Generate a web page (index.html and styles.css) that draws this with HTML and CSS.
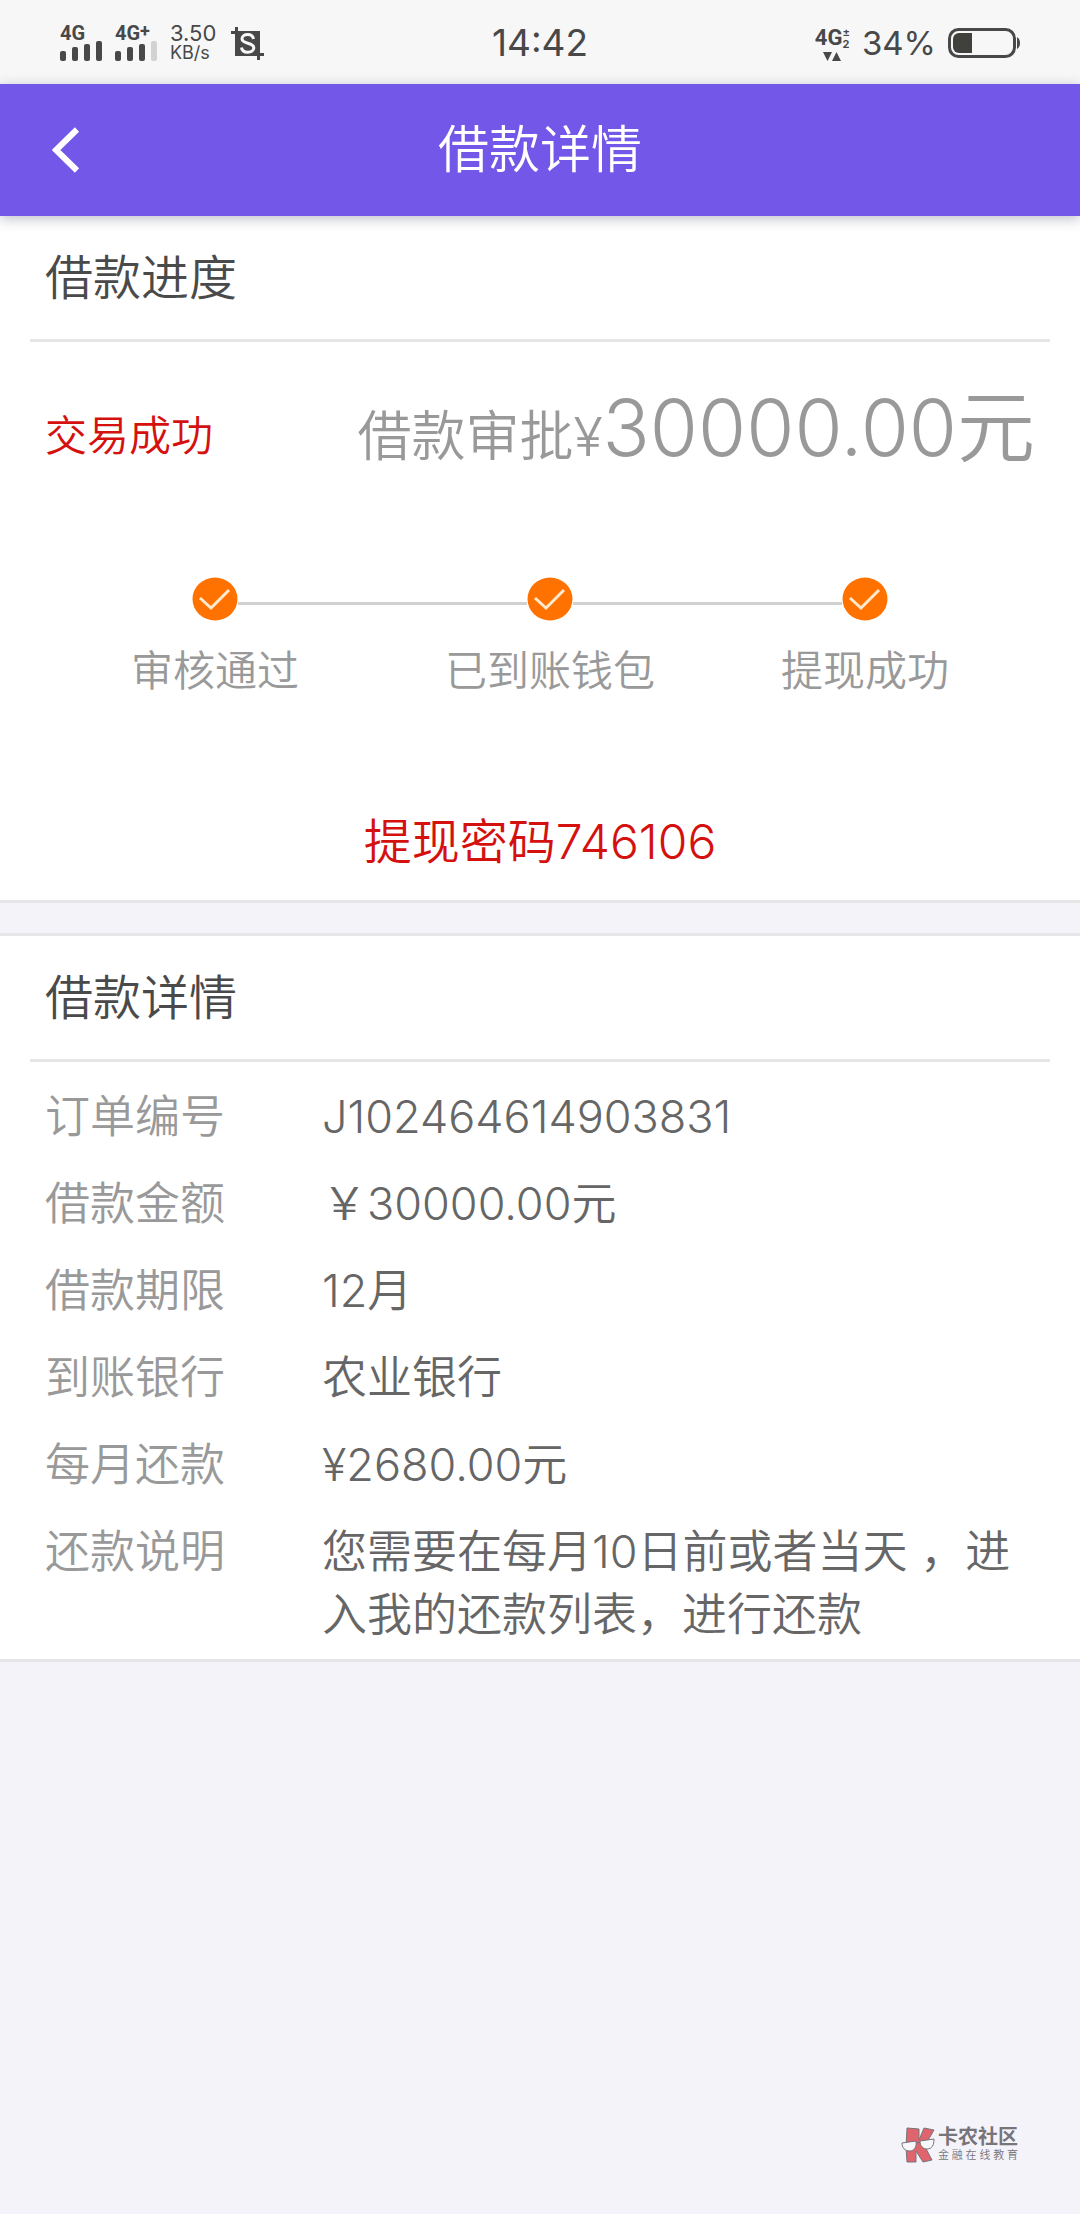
FILE: index.html
```
<!DOCTYPE html>
<html lang="zh-CN">
<head>
    <meta charset="UTF-8">
    <meta name="viewport" content="width=device-width, initial-scale=1.0">
    <title>借款详情</title>
    <link rel="stylesheet" href="styles.css">
</head>
<body>
    <div class="status-bar">
        <div class="status-left">
            <div class="signal">
                <span class="network">4G</span>
                <svg width="42" height="20" viewBox="0 0 42 20" fill="#484848">
                    <rect x="0" y="10" width="6" height="10" rx="2"/>
                    <rect x="12" y="6" width="6" height="14" rx="2"/>
                    <rect x="24" y="3" width="6" height="17" rx="2"/>
                    <rect x="36" y="0" width="6" height="20" rx="2"/>
                </svg>
            </div>
            <div class="signal">
                <span class="network">4G<sup>+</sup></span>
                <svg width="42" height="20" viewBox="0 0 42 20" fill="#484848">
                    <rect x="0" y="10" width="6" height="10" rx="2"/>
                    <rect x="12" y="6" width="6" height="14" rx="2"/>
                    <rect x="24" y="3" width="6" height="17" rx="2"/>
                    <rect x="36" y="0" width="6" height="20" rx="2" fill="#d2d2d2"/>
                </svg>
            </div>
            <div class="speed">
                <span class="speed-value">3.50</span>
                <span class="speed-unit">KB/s</span>
            </div>
            <svg class="crop-icon" width="33" height="33" viewBox="0 0 33 33">
                <path d="M4 4h25v25H4z" fill="#484848"/>
                <path d="M0 5.500h6M5.500 0v6M27 27.500h6M27.500 27v6" fill="none" stroke="#484848" stroke-width="3"/>
                <path d="M22.500 12c-.5-3-2.800-4.500-5.800-4.500-3.200 0-5.700 1.600-5.700 4.300 0 6 11.800 2.800 11.800 9 0 2.800-2.700 4.400-6 4.400-3.500 0-6-1.700-6.300-4.700" fill="none" stroke="#f7f7f7" stroke-width="3"/>
            </svg>
        </div>
        <div class="time">14:42</div>
        <div class="status-right">
            <div class="data">
                <span class="network">4G</span>
                <span class="data-marks"><span>±</span><span>2</span></span>
                <svg class="arrows" width="18" height="9" viewBox="0 0 18 9" fill="#484848">
                    <path d="M0 0h9L4.500 9zM9 9h9l-4.500-9z"/>
                </svg>
            </div>
            <span class="percent">34%</span>
            <svg width="72" height="30" viewBox="0 0 72 30">
                <rect x="1.500" y="1.500" width="65" height="27" rx="9" fill="none" stroke="#484848" stroke-width="3"/>
                <path d="M24 5v20H11a6 6 0 0 1-6-6v-8a6 6 0 0 1 6-6z" fill="#40403c"/>
                <path d="M69 9q3 2 3 6t-3 6z" fill="#484848"/>
            </svg>
        </div>
    </div>

    <header class="header">
        <button class="back" type="button" aria-label="返回">
            <svg width="28" height="46" viewBox="0 0 28 46">
                <path d="M25 2.500L4 23l21 20.500" fill="none" stroke="#fff" stroke-width="6"/>
            </svg>
        </button>
        <h1>借款详情</h1>
    </header>

    <main>
        <section class="card">
            <h2>借款进度</h2>
            <div class="summary">
                <span class="state">交易成功</span>
                <span class="approved">借款审批¥<span class="amount">30000.00元</span></span>
            </div>
            <ol class="steps">
                <li>
                    <div class="track">
                        <svg width="46" height="44" viewBox="0 0 46 44"><ellipse cx="23" cy="22" rx="22.500" ry="21.500" fill="#ff7200"/><path d="M8 21l11 10L37 13" fill="none" stroke="#ffe9cf" stroke-width="3"/></svg>
                    </div>
                    <span>审核通过</span>
                </li>
                <li>
                    <div class="track">
                        <svg width="46" height="44" viewBox="0 0 46 44"><ellipse cx="23" cy="22" rx="22.500" ry="21.500" fill="#ff7200"/><path d="M8 21l11 10L37 13" fill="none" stroke="#ffe9cf" stroke-width="3"/></svg>
                    </div>
                    <span>已到账钱包</span>
                </li>
                <li>
                    <div class="track">
                        <svg width="46" height="44" viewBox="0 0 46 44"><ellipse cx="23" cy="22" rx="22.500" ry="21.500" fill="#ff7200"/><path d="M8 21l11 10L37 13" fill="none" stroke="#ffe9cf" stroke-width="3"/></svg>
                    </div>
                    <span>提现成功</span>
                </li>
            </ol>
            <p class="password">提现密码746106</p>
        </section>

        <section class="card details">
            <h2>借款详情</h2>
            <dl>
                <dt>订单编号</dt>
                <dd>J102464614903831</dd>
                <dt>借款金额</dt>
                <dd>￥30000.00元</dd>
                <dt>借款期限</dt>
                <dd>12月</dd>
                <dt>到账银行</dt>
                <dd>农业银行</dd>
                <dt>每月还款</dt>
                <dd>¥2680.00元</dd>
                <dt>还款说明</dt>
                <dd>您需要在每月10日前或者当天 ，进入我的还款列表，进行还款</dd>
            </dl>
        </section>
    </main>

    <footer class="community">
        <svg width="34" height="36" viewBox="0 0 34 36">
            <path d="M6 1l12 1v11l5-12 10 2-7 12-3 3 8 15-9 2-7-11v11H6L5 20z" fill="#e0646e" stroke="#77747a" stroke-width="1"/>
            <path d="M1 16l14-2c1 6-2 10-6 10-5 0-8-3-8-8zM19 14l14-2c0 6-2 10-7 10-4 0-7-3-7-8zM15 16l4-1" fill="#f8f7fa" stroke="#77747a" stroke-width="1"/>
        </svg>
        <div>
            <p class="community-name">卡农社区</p>
            <p class="community-slogan">金融在线教育</p>
        </div>
    </footer>
</body>
</html>
```
FILE: styles.css
```
* {
    margin: 0;
    padding: 0;
    box-sizing: border-box;
}

body {
    background: #f4f3f9;
    color: #666;
    font-family: Inter, "Noto Sans CJK SC", sans-serif;
    font-weight: 350;
    min-height: 100vh;
    display: flex;
    flex-direction: column;
}

svg {
    display: block;
    flex-shrink: 0;
}

/* status bar */
.status-bar {
    display: grid;
    grid-template-columns: 1fr auto 1fr;
    align-items: center;
    height: 84px;
    padding: 2px 60px 0;
    background: #f7f7f7;
    color: #484848;
    font-weight: 400;
}

.status-left,
.status-right {
    display: flex;
    align-items: center;
}

.status-right {
    justify-content: flex-end;
    gap: 12px;
}

.signal {
    margin-right: 13px;
}

.network {
    display: block;
    font-family: Roboto, sans-serif;
    font-size: 20px;
    font-weight: 700;
    line-height: 16px;
}

.network sup {
    font-size: 18px;
    line-height: 0;
    vertical-align: 3px;
}

.speed {
    margin-right: 15px;
}

.speed span {
    display: block;
}

.speed-value {
    font-size: 22px;
    line-height: 20px;
}

.speed-unit {
    font-size: 18px;
    line-height: 20px;
}

.time {
    font-size: 37px;
    line-height: 40px;
}

.percent {
    font-size: 33px;
    line-height: 40px;
}

.data {
    display: grid;
    grid-template-columns: auto auto;
    row-gap: 2px;
}

.data .network {
    font-size: 22px;
    line-height: 24px;
}

.data-marks {
    font-size: 11px;
    font-weight: 700;
    line-height: 12px;
}

.data-marks span {
    display: block;
}

.arrows {
    grid-column: 1 / 3;
    justify-self: center;
}

/* title bar */
.header {
    display: grid;
    grid-template-columns: 1fr auto 1fr;
    align-items: center;
    height: 132px;
    padding: 0 52px;
    background: #7357e8;
    color: #fff;
    box-shadow: 0 3px 12px rgba(40, 50, 90, 0.3);
    position: relative;
}

.back {
    justify-self: start;
    background: none;
    border: none;
    cursor: pointer;
}

h1 {
    font-size: 51px;
    font-weight: 350;
    line-height: 60px;
}

/* cards */
.card {
    background: #fff;
    border-bottom: 3px solid #e6e6e8;
}

.details {
    margin-top: 30px;
    border-top: 3px solid #e6e6e8;
}

h2 {
    margin: 0 30px;
    padding: 30px 15px;
    border-bottom: 3px solid #e6e6e8;
    color: #4a4a4a;
    font-size: 48px;
    font-weight: 350;
    line-height: 63px;
}

.summary {
    display: flex;
    justify-content: space-between;
    align-items: center;
    padding: 36px 45px;
}

.state {
    color: #d4110f;
    font-size: 42px;
}

.approved {
    color: #999;
    font-size: 54px;
    line-height: 100px;
}

.amount {
    font-size: 78px;
}

.steps {
    display: grid;
    grid-template-columns: 33fr 34fr 29fr;
    padding: 54px 70px 0 50px;
    list-style: none;
    color: #999;
    font-size: 42px;
    line-height: 63px;
    text-align: center;
}

.track {
    display: flex;
    align-items: center;
    margin-bottom: 18px;
}

.track::before,
.track::after {
    content: "";
    flex: 1;
    height: 3px;
    margin-top: 9px;
    background: #d0d2d2;
}

.steps li:first-child .track::before,
.steps li:last-child .track::after {
    background: none;
}

.password {
    padding: 108px 0 27px;
    color: #d4110f;
    font-size: 48px;
    line-height: 63px;
    text-align: center;
}

.details dl {
    display: grid;
    grid-template-columns: 277px 1fr;
    row-gap: 24px;
    padding: 23px 45px 13px;
    font-size: 45px;
    line-height: 63px;
}

.details dt {
    color: #999;
}

/* community mark */
.community {
    display: flex;
    align-items: center;
    gap: 3px;
    margin: auto 62px 51px auto;
    color: #77747a;
}

.community-name {
    font-size: 20px;
    font-weight: 700;
    line-height: 20px;
}

.community-slogan {
    font-size: 11px;
    line-height: 16px;
    text-align-last: justify;
}
```
